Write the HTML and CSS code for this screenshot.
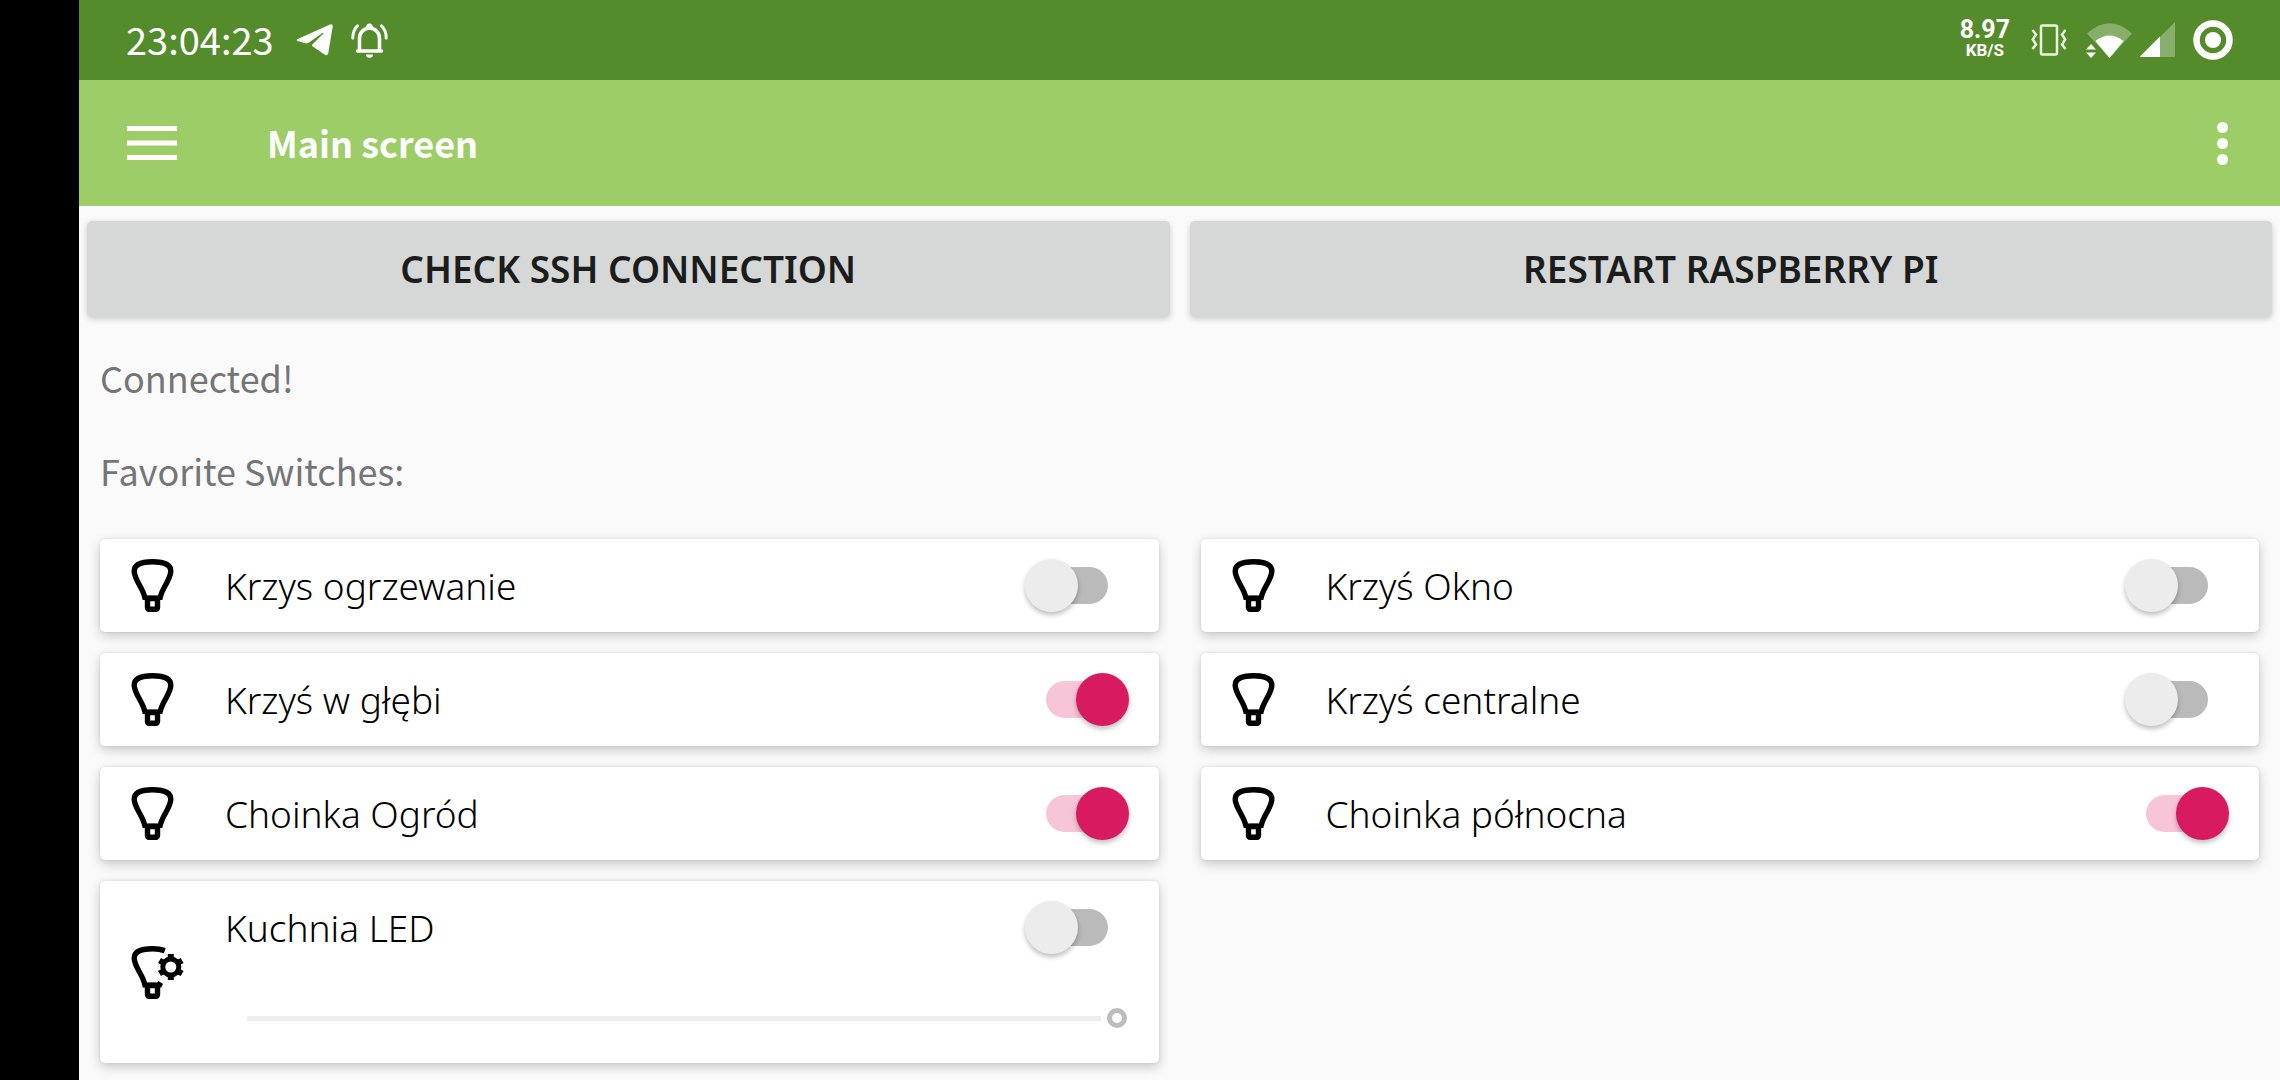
FILE: index.html
```html
<!DOCTYPE html>
<html lang="en">
<head>
<meta charset="utf-8">
<meta name="viewport" content="width=device-width, initial-scale=1">
<title>Main screen</title>
<link rel="stylesheet" href="styles.css">
</head>
<body>
<svg class="sprite" aria-hidden="true">
  <symbol id="bulb" viewBox="0 0 63 63">
    <path d="M23.8 43.8C22.6 35 13.2 25.5 13.2 17.3C13.2 10.3 20.5 7.8 31.5 7.8S49.8 10.3 49.8 17.3C49.8 25.5 40.400 35 39.200 43.8" fill="none" stroke="#000" stroke-width="5.400"/>
    <path d="M21.500 41.500h20v4.500h-20z"/>
    <rect x="26.500" y="44.500" width="10" height="10.800" rx="1.500" fill="none" stroke="#000" stroke-width="5.400"/>
  </symbol>
  <symbol id="bulb-gear" viewBox="0 0 63 63">
    <path d="M23.8 43.8C22.6 35 13.2 25.5 13.2 17.3C13.2 10.3 20.5 7.8 31.5 7.8C37 7.8 40.500 8.400 43.800 9.600" fill="none" stroke="#000" stroke-width="5.400"/>
    <path d="M21.500 41.500H36l1.500-1.500 4.500 3-1.800 3.500h-18.700z"/>
    <rect x="26.500" y="44.500" width="10" height="10.800" rx="1.500" fill="none" stroke="#000" stroke-width="5.400"/>
    <circle cx="49.800" cy="26" r="8" fill="none" stroke="#000" stroke-width="5"/>
    <path d="M49.800 13v5M49.800 34v5M38.500 19.500l4.400 2.500M56.700 30l4.400 2.500M38.500 32.500l4.400-2.500M56.700 22l4.400-2.500" fill="none" stroke="#000" stroke-width="6"/>
  </symbol>
</svg>

<div class="screen">
  <div class="status-bar">
    <time class="clock">23:04:23</time>
    <svg class="telegram" viewBox="0 0 37 32" role="img" aria-label="Telegram"><path d="M1.200 15.200 34 .5q3-1 2.700 2L32.300 29q-.8 3.400-3.800 1.500L16.800 22.500q-1.500-1.200 0-2.600L27.500 9.500q.4-1.300-1-.6L12.500 18.800q-1.500.8-3 .4L1.500 17q-1.600-.8-.3-1.800z" fill="#fff"/></svg>
    <svg class="bell" viewBox="0 0 37 35" role="img" aria-label="Alarm">
      <g fill="none" stroke="#fff" stroke-width="3.500" stroke-linecap="round">
        <path d="M8.500 28V15.500a10 10.500 0 0 1 20 0V28M6.500 28h24"/>
        <path d="M1.800 15C1.800 9.500 3 6 6.500 2.800M35.200 15C35.200 9.500 34 6 30.500 2.800" stroke-width="3"/>
      </g>
      <path d="M15 5a3.500 4.500 0 0 1 7 0zM15 31.500h7a3.500 3.300 0 0 1-7 0z" fill="#fff"/>
    </svg>
    <div class="speed"><span class="speed-value">8.97</span><span class="speed-unit">KB/S</span></div>
    <svg class="vibrate" viewBox="0 0 36 32" role="img" aria-label="Vibrate">
      <g fill="none" stroke="#eaf7dc" stroke-width="2.500"><rect x="10" y="1.500" width="16" height="29" rx="1.500"/>
      <path d="M1.500 6 5 10.500 1.800 15.500 5 20.500 1.500 25M34.500 6 31 10.500 34.200 15.500 31 20.500 34.500 25"/></g>
    </svg>
    <svg class="wifi" viewBox="0 0 47 35" role="img" aria-label="Wi-Fi">
      <path d="M1 10.500Q23.500-10 46 10.500L23.500 35z" fill="#fff" opacity=".3"/>
      <path d="M9.500 18Q23.500 7 37.500 18L23.500 35z" fill="#fff"/>
      <path d="M0 26.500h10L5 21zM0 29.500h10L5 35z" fill="#fff"/>
    </svg>
    <svg class="signal" viewBox="0 0 36 36" role="img" aria-label="Signal"><path d="M35 0v35H0z" fill="#fff" opacity=".3"/><path d="M20 14.500V35H1q-1.500-.2-.5-1z" fill="#fff"/></svg>
    <svg class="battery" viewBox="0 0 40 40" role="img" aria-label="Battery"><circle cx="20" cy="20" r="16.500" fill="none" stroke="#fff" stroke-width="6.500"/><circle cx="20" cy="20" r="8" fill="#fff"/></svg>
  </div>

  <header class="app-bar">
    <button class="icon-button" type="button" aria-label="Open menu"><svg class="burger" viewBox="0 0 50 34"><path d="M0 0h50v5H0zM0 14.500h50v5H0zM0 29h50v5H0z" fill="#fff"/></svg></button>
    <h1 class="title">Main screen</h1>
    <button class="icon-button" type="button" aria-label="More options"><svg class="dots" viewBox="0 0 11 43"><g fill="#fff"><circle cx="5.500" cy="5.500" r="5.500"/><circle cx="5.500" cy="21.500" r="5.500"/><circle cx="5.500" cy="37.500" r="5.500"/></g></svg></button>
  </header>

  <main>
    <div class="actions">
      <button class="action" type="button">CHECK SSH CONNECTION</button>
      <button class="action" type="button">RESTART RASPBERRY PI</button>
    </div>
    <p class="note">Connected!</p>
    <h2 class="note">Favorite Switches:</h2>

    <div class="switches">
      <div class="column">
        <div class="card"><svg class="icon"><use href="#bulb"/></svg><label class="name" for="s1">Krzys ogrzewanie</label><input class="toggle" id="s1" type="checkbox" role="switch"></div>
        <div class="card"><svg class="icon"><use href="#bulb"/></svg><label class="name" for="s2">Krzyś w głębi</label><input class="toggle" id="s2" type="checkbox" role="switch" checked></div>
        <div class="card"><svg class="icon"><use href="#bulb"/></svg><label class="name" for="s3">Choinka Ogród</label><input class="toggle" id="s3" type="checkbox" role="switch" checked></div>
        <div class="card card-dimmer"><svg class="icon"><use href="#bulb-gear"/></svg>
          <div class="dimmer">
            <div class="row"><label class="name" for="s4">Kuchnia LED</label><input class="toggle" id="s4" type="checkbox" role="switch"></div>
            <input class="slider" type="range" min="0" max="100" value="100" aria-label="Kuchnia LED brightness">
          </div>
        </div>
      </div>
      <div class="column">
        <div class="card"><svg class="icon"><use href="#bulb"/></svg><label class="name" for="s5">Krzyś Okno</label><input class="toggle" id="s5" type="checkbox" role="switch"></div>
        <div class="card"><svg class="icon"><use href="#bulb"/></svg><label class="name" for="s6">Krzyś centralne</label><input class="toggle" id="s6" type="checkbox" role="switch"></div>
        <div class="card"><svg class="icon"><use href="#bulb"/></svg><label class="name" for="s7">Choinka północna</label><input class="toggle" id="s7" type="checkbox" role="switch" checked></div>
      </div>
    </div>
  </main>
</div>
</body>
</html>
```
FILE: styles.css
```css
* {
  box-sizing: border-box;
}

body {
  margin: 0;
  background: #000;
  font-family: "Noto Sans", "Open Sans", sans-serif;
}

.sprite {
  display: none;
}

/* The black strip on the left is the camera cutout in landscape. */
.screen {
  margin-left: 79px;
  min-height: 100vh;
  background: #fafafa;
}

.status-bar {
  display: flex;
  align-items: center;
  height: 80px;
  padding: 0 47px;
  background: #548c2c;
  color: #fff;
}

.clock {
  padding-bottom: 2px;
  font: 400 38px/78px "Noto Sans CJK SC", sans-serif;
  margin-right: 22px;
}

.telegram {
  width: 37px;
  height: 32px;
  margin-right: 18px;
}

.bell {
  width: 37px;
  height: 35px;
}

.speed {
  display: flex;
  flex-direction: column;
  align-items: center;
  gap: 2px;
  margin: 0 21px 2px auto;
  font-family: Roboto, sans-serif;
  font-weight: 700;
}

.speed-value {
  font-size: 25px;
  line-height: 20px;
}

.speed-unit {
  font-size: 17px;
  line-height: 16px;
}

.vibrate {
  width: 36px;
  height: 32px;
  margin-right: 19px;
}

.wifi {
  width: 47px;
  height: 35px;
  margin-right: 7px;
}

.signal {
  width: 36px;
  height: 36px;
  margin-right: 17px;
}

.battery {
  width: 40px;
  height: 40px;
}

.app-bar {
  display: flex;
  align-items: center;
  height: 126px;
  padding: 0 42px 0 38px;
  background: #9ccd66;
  color: #fff;
}

.icon-button {
  display: flex;
  padding: 10px;
  border: 0;
  background: none;
}

.burger {
  width: 50px;
  height: 34px;
}

.dots {
  width: 11px;
  height: 43px;
}

.title {
  flex: 1;
  margin: 0 0 0 80px;
  padding-bottom: 3px;
  font: 700 36px/48px "Noto Sans CJK SC", sans-serif;
}

.actions {
  display: flex;
  gap: 20px;
  padding: 15px 8px 14px;
}

.action {
  flex: 1;
  height: 96px;
  padding: 0;
  border: 0;
  border-radius: 5px;
  background: #d6d8d7;
  box-shadow: 0 2px 6px rgba(0, 0, 0, .2);
  color: #1b1d1c;
  font: 600 37px/48px "Noto Sans", sans-serif;
}

.note {
  margin: 0;
  padding-left: 21px;
  color: #757575;
  font: 400 36px/93px "Noto Sans CJK SC", sans-serif;
}

.switches {
  display: flex;
  align-items: flex-start;
  gap: 42px;
  padding: 22px 21px 16px;
}

.column {
  display: flex;
  flex: 1;
  flex-direction: column;
  gap: 21px;
}

.card {
  display: flex;
  align-items: center;
  min-height: 93px;
  padding: 0 30px 0 21px;
  border-radius: 5px;
  background: #fff;
  box-shadow: 0 4px 12px rgba(0, 0, 0, .2), 0 0 3px rgba(0, 0, 0, .1);
}

.card-dimmer {
  min-height: 182px;
}

.icon {
  width: 63px;
  height: 63px;
  margin-right: 41px;
}

.name {
  flex: 1;
  color: #000;
  font-size: 37px;
  font-weight: 300;
  line-height: 48px;
}

.dimmer {
  flex: 1;
  height: 182px;
}

.row {
  display: flex;
  align-items: center;
  height: 93px;
}

.toggle {
  appearance: none;
  position: relative;
  width: 62px;
  height: 37px;
  margin: 0 21px;
  border-radius: 19px;
  background: #bababa;
}

.toggle::before {
  content: "";
  position: absolute;
  top: -8px;
  left: -21px;
  width: 53px;
  height: 53px;
  border-radius: 50%;
  background: #ececec;
  box-shadow: 0 3px 5px rgba(0, 0, 0, .25);
}

.toggle:checked {
  background: #f7c5d7;
}

.toggle:checked::before {
  left: 30px;
  background: #d81b60;
}

.slider {
  appearance: none;
  display: block;
  width: calc(100% - 24px);
  height: 20px;
  margin: 34px 0 0 22px;
  background: linear-gradient(#ededed, #ededed) left center / calc(100% - 26px) 5px no-repeat;
}

.slider::-webkit-slider-thumb {
  appearance: none;
  width: 20px;
  height: 20px;
  border: 5px solid #bdbdbd;
  border-radius: 50%;
  background: #fff;
}
```
